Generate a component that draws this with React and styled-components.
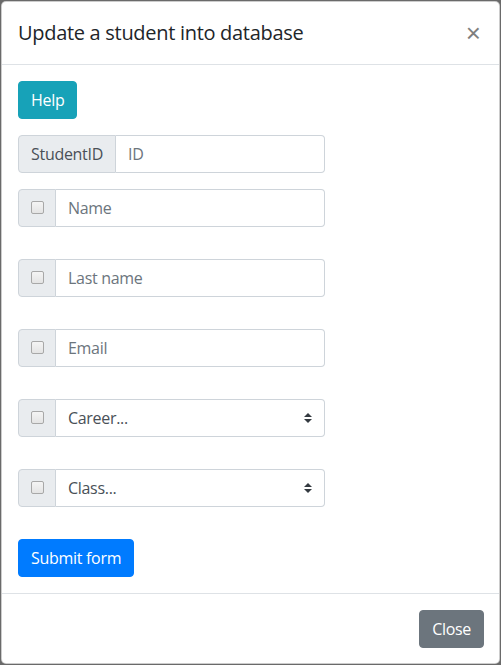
import React from 'react';
import styled, { createGlobalStyle } from 'styled-components';

const GlobalStyle = createGlobalStyle`
  html, body {
    margin: 0;
    padding: 0;
    background: #6a6a6a;
    font-family: "Segoe UI", "Open Sans", "Liberation Sans", sans-serif;
    letter-spacing: -0.3px;
  }
  * { box-sizing: border-box; }
`;

const Backdrop = styled.div`
  padding: 1px;
  min-height: 665px;
`;

const Modal = styled.div`
  background: #fff;
  border: 1px solid rgba(0, 0, 0, 0.2);
  border-radius: 5px;
  width: 499px;
  height: 663px;
  display: flex;
  flex-direction: column;
`;

const ModalHeader = styled.div`
  display: flex;
  align-items: center;
  justify-content: space-between;
  padding: 16px;
  border-bottom: 1px solid #dee2e6;
`;

const Title = styled.h5`
  margin: 0;
  font-size: 20px;
  font-weight: 500;
  line-height: 30px;
  color: #212529;
`;

const CloseX = styled.button`
  border: 0;
  background: transparent;
  padding: 0;
  margin: 0 2px 0 0;
  font-family: "Liberation Sans", sans-serif;
  font-size: 26px;
  font-weight: 400;
  line-height: 1;
  color: #000;
  opacity: 0.5;
  cursor: pointer;
`;

const ModalBody = styled.div`
  flex: 1;
  padding: 16px;
  display: flex;
  flex-direction: column;
  align-items: flex-start;
`;

const ModalFooter = styled.div`
  display: flex;
  justify-content: flex-end;
  padding: 16px 15px 15px 16px;
  border-top: 1px solid #dee2e6;
`;

const Button = styled.button`
  font-family: inherit;
  letter-spacing: inherit;
  font-size: 16px;
  line-height: 24px;
  padding: 6px 12px;
  border: 1px solid ${p => p.bg};
  border-radius: 4px;
  background: ${p => p.bg};
  color: #fff;
  cursor: pointer;
  margin-bottom: ${p => p.mb || 0}px;
`;

const InputGroup = styled.div`
  display: flex;
  width: 307px;
  height: 38px;
  margin-bottom: ${p => p.mb}px;
`;

const Prepend = styled.div`
  display: flex;
  align-items: center;
  justify-content: center;
  padding: 0 12px;
  background: #e9ecef;
  border: 1px solid #ced4da;
  border-radius: 4px 0 0 4px;
  font-size: 16px;
  color: #495057;
  ${p => p.narrow && 'width: 38px; padding: 0;'}
`;

const Check = styled.input`
  appearance: none;
  width: 13px;
  height: 13px;
  margin: 0 0 2px 0;
  border: 1px solid #a8a8a8;
  border-radius: 2px;
  background: linear-gradient(#f4f4f4, #e4e4e4);
`;

const TextInput = styled.input`
  flex: 1;
  min-width: 0;
  height: 38px;
  padding: 6px 12px;
  font-family: inherit;
  letter-spacing: inherit;
  font-size: 16px;
  color: #495057;
  border: 1px solid #ced4da;
  border-left: 0;
  border-radius: 0 4px 4px 0;
  outline: none;
  &::placeholder { color: #6c757d; }
`;

const Select = styled.select`
  flex: 1;
  min-width: 0;
  height: 38px;
  padding: 6px 28px 6px 12px;
  font-family: inherit;
  letter-spacing: inherit;
  font-size: 16px;
  color: #495057;
  border: 1px solid #ced4da;
  border-left: 0;
  border-radius: 0 4px 4px 0;
  appearance: none;
  outline: none;
  background: #fff url("data:image/svg+xml,%3csvg xmlns='http://www.w3.org/2000/svg' viewBox='0 0 4 5'%3e%3cpath fill='%23343a40' d='M2 0L0 2h4zm0 5L0 3h4z'/%3e%3c/svg%3e") no-repeat right 12px center / 8px 10px;
`;

const fields = [
  { kind: 'text', placeholder: 'Name', mb: 32 },
  { kind: 'text', placeholder: 'Last name', mb: 32 },
  { kind: 'text', placeholder: 'Email', mb: 32 },
  { kind: 'select', placeholder: 'Career...', mb: 32 },
  { kind: 'select', placeholder: 'Class...', mb: 32 },
];

export default function App() {
  return (
    <>
      <GlobalStyle />
      <Backdrop>
        <Modal>
          <ModalHeader>
            <Title>Update a student into database</Title>
            <CloseX aria-label="Close">&times;</CloseX>
          </ModalHeader>
          <ModalBody>
            <Button bg="#17a2b8" mb={16}>Help</Button>
            <InputGroup mb={16}>
              <Prepend>StudentID</Prepend>
              <TextInput placeholder="ID" />
            </InputGroup>
            {fields.map((f, i) => (
              <InputGroup key={i} mb={f.mb}>
                <Prepend narrow><Check type="checkbox" /></Prepend>
                {f.kind === 'text' ? (
                  <TextInput placeholder={f.placeholder} />
                ) : (
                  <Select defaultValue="">
                    <option value="">{f.placeholder}</option>
                  </Select>
                )}
              </InputGroup>
            ))}
            <Button bg="#007bff">Submit form</Button>
          </ModalBody>
          <ModalFooter>
            <Button bg="#6c757d">Close</Button>
          </ModalFooter>
        </Modal>
      </Backdrop>
    </>
  );
}
